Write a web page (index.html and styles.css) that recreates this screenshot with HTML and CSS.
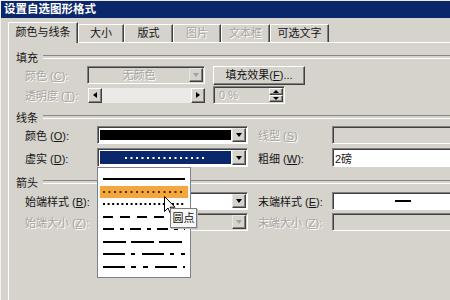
FILE: index.html
```html
<!DOCTYPE html>
<html lang="zh-CN">
<head>
  <meta charset="UTF-8">
  <title>设置自选图形格式</title>
  <link rel="stylesheet" href="styles.css">
</head>
<body>
  <div class="dialog">
    <div class="titlebar">设置自选图形格式</div>
    <div class="tabs">
      <div class="tab active w1">颜色与线条</div>
      <div class="tab w2">大小</div>
      <div class="tab w3">版式</div>
      <div class="tab w4 off">图片</div>
      <div class="tab w5 off">文本框</div>
      <div class="tab w6">可选文字</div>
    </div>
    <div class="panel">
      <!-- 填充 -->
      <div class="group-head">填充</div>
      <div class="rows fill">
        <span class="lbl off">颜色 (<u>C</u>):</span>
        <div class="combo disabled">
          <div class="field center off">无颜色</div>
          <span class="drop"><i class="tri"></i></span>
        </div>
        <div class="btn">填充效果(<u>F</u>)...</div>
        <span class="lbl off">透明度 (<u>T</u>):</span>
        <div class="scroll">
          <span class="sbtn"><i class="tri-l"></i></span>
          <span class="track"></span>
          <span class="sbtn"><i class="tri-r"></i></span>
        </div>
        <div class="spin">
          <span class="spin-text off">0 %</span>
          <span class="spin-btns">
            <span class="sbtn small"><i class="tri-u"></i></span>
            <span class="sbtn small"><i class="tri-d"></i></span>
          </span>
        </div>
      </div>

      <!-- 线条 -->
      <div class="group-head gap-lines">线条</div>
      <div class="rows lines">
        <span class="lbl">颜色 (<u>O</u>):</span>
        <div class="combo">
          <div class="field"><span class="swatch"></span></div>
          <span class="drop"><i class="tri"></i></span>
        </div>
        <span class="lbl right off">线型 (<u>S</u>)</span>
        <div class="box disabled"></div>

        <span class="lbl">虚实 (<u>D</u>):</span>
        <div class="combo dash">
          <div class="field sel">
            <svg width="82" height="4"><line x1="0" y1="2" x2="82" y2="2" stroke="#fff" stroke-width="2" stroke-dasharray="2 3.5"/></svg>
          </div>
          <span class="drop"><i class="tri"></i></span>

          <div class="popup">
            <div class="opt"><svg width="82" height="4"><line x1="0" y1="2" x2="82" y2="2" stroke="#000" stroke-width="2"/></svg></div>
            <div class="opt hot"><svg width="82" height="4"><line x1="0" y1="2" x2="82" y2="2" stroke="#4a3110" stroke-width="2" stroke-dasharray="2 3.5"/></svg></div>
            <div class="opt"><svg width="82" height="4"><line x1="0" y1="2" x2="82" y2="2" stroke="#000" stroke-width="2" stroke-dasharray="2 2.6"/></svg></div>
            <div class="opt"><svg width="82" height="4"><line x1="0" y1="2" x2="82" y2="2" stroke="#000" stroke-width="2" stroke-dasharray="10 7"/></svg></div>
            <div class="opt"><svg width="82" height="4"><line x1="0" y1="2" x2="82" y2="2" stroke="#000" stroke-width="2" stroke-dasharray="11 6 4 6"/></svg></div>
            <div class="opt"><svg width="82" height="4"><line x1="0" y1="2" x2="82" y2="2" stroke="#000" stroke-width="2" stroke-dasharray="23 5"/></svg></div>
            <div class="opt"><svg width="82" height="4"><line x1="0" y1="2" x2="82" y2="2" stroke="#000" stroke-width="2" stroke-dasharray="22 6 4 7"/></svg></div>
            <div class="opt"><svg width="82" height="4"><line x1="0" y1="2" x2="82" y2="2" stroke="#000" stroke-width="2" stroke-dasharray="22 6 5 7 5 7"/></svg></div>

            <svg class="cursor" width="12" height="19" viewBox="0 0 12 19">
              <path d="M0.5 0.5 L0.5 15.5 L4 12 L6.5 17.8 L8.6 16.9 L6.1 11.2 L11 11.2 Z" fill="#fff" stroke="#000" stroke-width="1" stroke-linejoin="round"/>
            </svg>
            <div class="tip">圆点</div>
          </div>
        </div>
        <span class="lbl right">粗细 (<u>W</u>):</span>
        <div class="box white"><span class="box-text">2磅</span></div>
      </div>

      <!-- 箭头 -->
      <div class="group-head gap-arrows">箭头</div>
      <div class="rows arrows">
        <span class="lbl">始端样式 (<u>B</u>):</span>
        <div class="combo">
          <div class="field"></div>
          <span class="drop"><i class="tri"></i></span>
        </div>
        <span class="lbl right">末端样式 (<u>E</u>):</span>
        <div class="box white"><span class="end-line"></span></div>

        <span class="lbl off">始端大小 (<u>Z</u>):</span>
        <div class="combo disabled">
          <div class="field"></div>
          <span class="drop"><i class="tri"></i></span>
        </div>
        <span class="lbl right off">末端大小 (<u>Z</u>):</span>
        <div class="box disabled"></div>
      </div>
    </div>
  </div>
</body>
</html>
```

FILE: styles.css
```css
* {
  margin: 0;
  padding: 0;
  box-sizing: border-box;
}
body {
  width: 450px;
  height: 300px;
  overflow: hidden;
  background: #d6d3cd;
  font-family: "Liberation Sans", "Noto Sans CJK SC", sans-serif;
  font-size: 11px;
  color: #151515;
}
.off {
  color: #a8a59f;
  text-shadow: 1px 1px 0 #fff;
}
u {
  text-decoration: underline;
}

.dialog {
  height: 300px;
  border-top: 1px solid #ecebe7;
  border-left: 1px solid #f2f1ee;
}
.titlebar {
  height: 17px;
  line-height: 17px;
  padding-left: 3px;
  background: #0b276c;
  color: #fff;
  font-size: 11.5px;
  font-weight: 700;
}

/* tabs */
.tabs {
  height: 24px;
  display: flex;
  align-items: flex-end;
  padding-left: 7px;
}
.tab {
  height: 18px;
  line-height: 17px;
  text-align: center;
  border-top: 1px solid #fff;
  border-left: 1px solid #fff;
  border-right: 1px solid #404040;
  box-shadow: inset -1px 0 0 #808080;
}
.tab.active {
  height: 21px;
  line-height: 19px;
  margin-bottom: -1px;
  background: #d6d3cd;
  position: relative;
  z-index: 1;
}
.w1 { width: 70px; }
.w2 { width: 46px; }
.w3 { width: 49px; }
.w4 { width: 48px; }
.w5 { width: 49px; }
.w6 { width: 59px; }

.panel {
  height: 260px;
  margin-left: 7px;
  padding: 5px 0 0 16px;
  border-top: 1px solid #fff;
  border-left: 1px solid #fff;
}

/* group headers */
.group-head {
  height: 18px;
  margin-left: -9px;
  display: flex;
  align-items: center;
}
.group-head::after {
  content: '';
  flex: 1;
  height: 2px;
  margin-left: 5px;
  border-top: 1px solid #8a8782;
  border-bottom: 1px solid #fff;
}
.gap-lines { margin-top: 4px; }
.gap-arrows { margin-top: 6px; }

/* rows */
.rows {
  display: grid;
  align-items: center;
}
.fill {
  grid-template-columns: 62px 118px 8px 92px;
  grid-auto-rows: 18px;
  row-gap: 2px;
}
.fill .btn,
.fill .spin {
  grid-column: 4;
}
.lines {
  grid-template-columns: 72px 151px 84px 130px;
  grid-template-rows: 18px 19px;
  row-gap: 4px;
}
.arrows {
  grid-template-columns: 72px 151px 84px 130px;
  grid-template-rows: 18px 18px;
  row-gap: 3px;
  margin-top: 1px;
}
.lbl {
  white-space: nowrap;
}
.lbl.right {
  padding-left: 10px;
}

/* combo boxes */
.combo {
  height: 100%;
  display: flex;
  padding: 1px;
  background: #fff;
  border: 1px solid;
  border-color: #808080 #fff #fff #808080;
  box-shadow: inset 1px 1px 0 #404040;
  position: relative;
}
.combo.disabled {
  background: #d6d3cd;
}
.field {
  flex: 1;
  display: flex;
  align-items: center;
  justify-content: center;
}
.field.center {
  line-height: 14px;
}
.field.sel {
  background: #0b276c;
  margin: 1px;
}
.swatch {
  flex: 1;
  align-self: stretch;
  margin: 2px 1px;
  background: #000;
}
.drop {
  width: 14px;
  display: flex;
  align-items: center;
  justify-content: center;
  background: #d6d3cd;
  border: 1px solid;
  border-color: #e8e6e2 #404040 #404040 #e8e6e2;
  box-shadow: inset -1px -1px 0 #808080;
}
.tri {
  width: 0;
  height: 0;
  border-left: 3.5px solid transparent;
  border-right: 3.5px solid transparent;
  border-top: 4px solid #000;
}
.disabled .tri {
  border-top-color: #a0a0a0;
}

/* button */
.btn {
  height: 19px;
  align-self: start;
  line-height: 17px;
  text-align: center;
  background: #d6d3cd;
  border: 1px solid;
  border-color: #fff #404040 #404040 #fff;
  box-shadow: inset -1px -1px 0 #808080;
}

/* scroll bar */
.scroll {
  height: 15px;
  display: flex;
  margin-left: 1px;
}
.track {
  flex: 1;
  background: #eceae6;
}
.sbtn {
  width: 14px;
  display: flex;
  align-items: center;
  justify-content: center;
  background: #d6d3cd;
  border: 1px solid;
  border-color: #fff #404040 #404040 #fff;
  box-shadow: inset -1px -1px 0 #808080;
}
.sbtn.small {
  width: 14px;
  height: 8px;
}
.tri-l, .tri-r {
  width: 0;
  height: 0;
  border-top: 3.5px solid transparent;
  border-bottom: 3.5px solid transparent;
}
.tri-l { border-right: 4px solid #000; }
.tri-r { border-left: 4px solid #000; }
.tri-u, .tri-d {
  width: 0;
  height: 0;
  border-left: 3px solid transparent;
  border-right: 3px solid transparent;
}
.tri-u { border-bottom: 3px solid #000; }
.tri-d { border-top: 3px solid #000; }

/* spinner */
.spin {
  width: 72px;
  height: 18px;
  display: flex;
  border: 1px solid;
  border-color: #808080 #fff #fff #808080;
  box-shadow: inset 1px 1px 0 #404040;
  padding: 1px;
}
.spin-text {
  flex: 1;
  padding-left: 4px;
  line-height: 14px;
}
.spin-btns {
  display: flex;
  flex-direction: column;
}

/* right column boxes */
.box {
  width: 130px;
  height: 100%;
  display: flex;
  align-items: center;
  border: 1px solid;
  border-color: #808080 #fff #fff #808080;
  box-shadow: inset 1px 1px 0 #404040;
}
.box.white {
  background: #fff;
}
.box-text {
  padding-left: 2px;
}
.end-line {
  width: 16px;
  height: 2px;
  margin-left: 62px;
  background: #000;
}

/* dash style drop list */
.popup {
  position: absolute;
  left: -1px;
  top: 18px;
  width: 94px;
  height: 111px;
  padding-top: 5px;
  background: #fff;
  border: 1px solid #808089;
  z-index: 5;
}
.opt {
  height: 12.5px;
  display: flex;
  align-items: center;
  justify-content: center;
}
.opt svg {
  display: block;
}
.opt.hot {
  margin: 0 2px;
  background: #f3a63c;
}
.cursor {
  position: absolute;
  left: 66px;
  top: 28px;
}
.tip {
  position: absolute;
  left: 72px;
  top: 40px;
  width: 27px;
  height: 20px;
  line-height: 18px;
  text-align: center;
  background: #f7f7f3;
  border: 1px solid #7d7d86;
  box-shadow: 1px 1px 0 #b8bac4;
  color: #111;
}
```
